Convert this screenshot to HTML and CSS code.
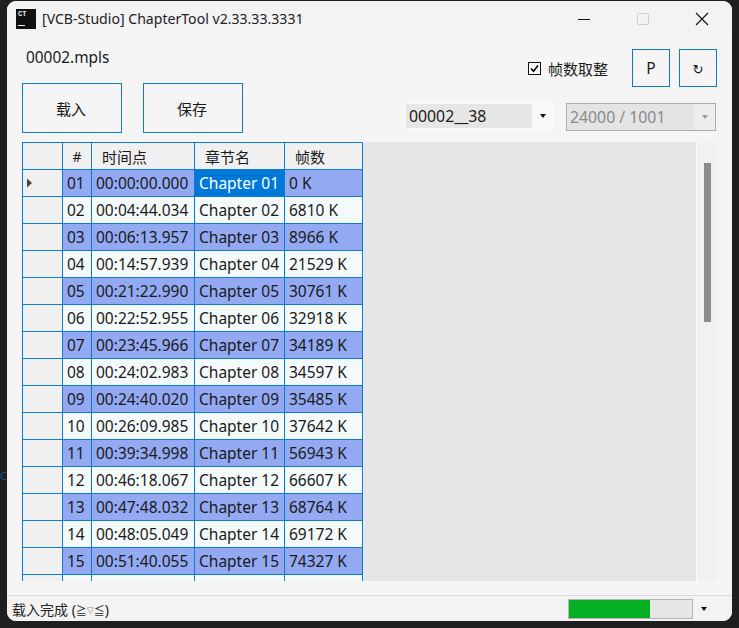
FILE: index.html
```html
<!DOCTYPE html>
<html lang="zh">
<head>
<meta charset="utf-8">
<title>ChapterTool</title>
<link rel="stylesheet" href="styles.css">
</head>
<body>
<span class="behind">C</span>
<div class="window">
  <header class="titlebar">
    <span class="appicon"><span class="appicon-text">CT</span><span class="appicon-bar"></span></span>
    <span class="title">[VCB-Studio] ChapterTool v2.33.33.3331</span>
    <span class="controls">
      <svg class="ctl" width="14" height="14" viewBox="0 0 14 14"><path d="M1 7.5h12" stroke="#111" stroke-width="1.1"/></svg>
      <svg class="ctl" width="14" height="14" viewBox="0 0 14 14"><rect x="1.5" y="1.5" width="11" height="11" rx="1.5" fill="none" stroke="#cfcfcf"/></svg>
      <svg class="ctl" width="14" height="14" viewBox="0 0 14 14"><path d="M1 1l12 12M13 1L1 13" stroke="#111" stroke-width="1.1"/></svg>
    </span>
  </header>
  <section class="toolbar">
    <div class="left">
      <div class="file">00002.mpls</div>
      <div class="actions">
        <button class="btn big">载入</button>
        <button class="btn big">保存</button>
      </div>
    </div>
    <div class="right">
      <div class="top-row">
        <label class="check">
          <span class="box"><svg width="13" height="13" viewBox="0 0 13 13"><path d="M3 6.5l2.5 2.7L10 3.4" fill="none" stroke="#000" stroke-width="1.6"/></svg></span>
          <span>帧数取整</span>
        </label>
        <button class="btn square">P</button>
        <button class="btn square refresh">↻</button>
      </div>
      <div class="combo-row">
        <div class="combo">
          <span class="combo-value">00002__38</span>
          <span class="combo-arrow"><i class="tri"></i></span>
        </div>
        <div class="combo off">
          <span class="combo-value">24000 / 1001</span>
          <span class="combo-arrow"><i class="tri"></i></span>
        </div>
      </div>
    </div>
  </section>
  <main class="main">
    <div class="grid">
      <table class="table">
        <thead>
          <tr><th class="rh"></th><th class="c-n">#</th><th class="c-t">时间点</th><th class="c-c">章节名</th><th class="c-f">帧数</th></tr>
        </thead>
        <tbody>
          <tr class="alt"><td class="rh"><svg class="cur" width="5" height="10" viewBox="0 0 6 11"><path d="M0 0l6 5.5L0 11z" fill="#444"/></svg></td><td>01</td><td>00:00:00.000</td><td class="sel">Chapter 01</td><td>0 K</td></tr>
          <tr><td class="rh"></td><td>02</td><td>00:04:44.034</td><td>Chapter 02</td><td>6810 K</td></tr>
          <tr class="alt"><td class="rh"></td><td>03</td><td>00:06:13.957</td><td>Chapter 03</td><td>8966 K</td></tr>
          <tr><td class="rh"></td><td>04</td><td>00:14:57.939</td><td>Chapter 04</td><td>21529 K</td></tr>
          <tr class="alt"><td class="rh"></td><td>05</td><td>00:21:22.990</td><td>Chapter 05</td><td>30761 K</td></tr>
          <tr><td class="rh"></td><td>06</td><td>00:22:52.955</td><td>Chapter 06</td><td>32918 K</td></tr>
          <tr class="alt"><td class="rh"></td><td>07</td><td>00:23:45.966</td><td>Chapter 07</td><td>34189 K</td></tr>
          <tr><td class="rh"></td><td>08</td><td>00:24:02.983</td><td>Chapter 08</td><td>34597 K</td></tr>
          <tr class="alt"><td class="rh"></td><td>09</td><td>00:24:40.020</td><td>Chapter 09</td><td>35485 K</td></tr>
          <tr><td class="rh"></td><td>10</td><td>00:26:09.985</td><td>Chapter 10</td><td>37642 K</td></tr>
          <tr class="alt"><td class="rh"></td><td>11</td><td>00:39:34.998</td><td>Chapter 11</td><td>56943 K</td></tr>
          <tr><td class="rh"></td><td>12</td><td>00:46:18.067</td><td>Chapter 12</td><td>66607 K</td></tr>
          <tr class="alt"><td class="rh"></td><td>13</td><td>00:47:48.032</td><td>Chapter 13</td><td>68764 K</td></tr>
          <tr><td class="rh"></td><td>14</td><td>00:48:05.049</td><td>Chapter 14</td><td>69172 K</td></tr>
          <tr class="alt"><td class="rh"></td><td>15</td><td>00:51:40.055</td><td>Chapter 15</td><td>74327 K</td></tr>
          <tr><td class="rh"></td><td></td><td></td><td></td><td></td></tr>
        </tbody>
      </table>
    </div>
    <div class="scrollbar"><div class="thumb"></div></div>
  </main>
  <footer class="status">
    <span class="status-text">载入完成 (<span class="kao">≧</span><span class="kao-mid">▽</span><span class="kao">≦</span>)</span>
    <div class="progress"><div class="progress-fill"></div></div>
    <span class="status-arrow"><i class="tri"></i></span>
  </footer>
</div>
</body>
</html>
```
FILE: styles.css
```css
* { box-sizing: border-box; }
html, body { margin: 0; height: 628px; overflow: hidden; }
body {
  background: #1f1f1f;
  padding: 1px 7px 7px;
  font-family: "Noto Sans", "Noto Sans CJK SC", sans-serif;
  font-size: 14px;
  color: #1a1a1a;
  position: relative;
}
.behind {
  position: absolute;
  left: 0;
  top: 468px;
  font-size: 11px;
  color: #1c4f8c;
}
.window {
  height: 620px;
  background: #f5f5f5;
  border-radius: 9px;
  display: flex;
  flex-direction: column;
  overflow: hidden;
  position: relative;
}
.titlebar {
  height: 32px;
  flex: none;
  background: #f3f3f3;
  display: flex;
  align-items: center;
  padding-left: 9px;
  padding-top: 3px;
}
.appicon {
  width: 20px;
  height: 20px;
  background: #111;
  position: relative;
  flex: none;
  display: block;
}
.appicon-text {
  position: absolute;
  left: 2px;
  top: 1px;
  font: bold 7px/9px "Liberation Mono", monospace;
  color: #eee;
}
.appicon-bar {
  position: absolute;
  left: 2px;
  bottom: 3px;
  width: 7px;
  height: 1px;
  background: #eee;
}
.title {
  margin-left: 6px;
  font-size: 14.1px;
  color: #222;
}
.controls {
  margin-left: auto;
  display: flex;
  align-items: center;
  gap: 45px;
  padding-right: 23px;
}
.ctl { display: block; }
.toolbar {
  height: 109px;
  flex: none;
  display: flex;
  justify-content: space-between;
  padding: 0 15px;
}
.left { padding-top: 13px; }
.file {
  height: 24px;
  line-height: 24px;
  padding-left: 4px;
  font-size: 15.4px;
}
.actions {
  display: flex;
  gap: 21px;
  margin-top: 13px;
}
.btn {
  background: #f5f5f5;
  border: 1px solid #0f7cc4;
  padding: 0 2px 0 0;
  font-family: inherit;
  color: #1a1a1a;
  font-size: 15px;
}
.big { width: 100px; height: 50px; }
.square { width: 38px; height: 38px; font-size: 15.5px; padding: 0; }
.refresh { font-family: "DejaVu Sans", sans-serif; font-size: 13px; padding-top: 3px; }
.right {
  display: flex;
  flex-direction: column;
  align-items: flex-end;
  padding-top: 16px;
  gap: 16px;
}
.top-row {
  display: flex;
  align-items: center;
  gap: 9px;
}
.check {
  display: flex;
  align-items: center;
  gap: 7px;
  margin-right: 15px;
  font-size: 15px;
}
.box {
  width: 13px;
  height: 13px;
  border: 1px solid #111;
  background: #fff;
  display: flex;
  align-items: center;
  justify-content: center;
}
.box svg { flex: none; display: block; margin: -1px; }
.combo-row {
  display: flex;
  align-items: flex-start;
  gap: 12px;
  margin-right: 1px;
}
.combo {
  width: 149px;
  height: 26px;
  display: flex;
  background: #f8f8f8;
  border: 1px solid #fbfbfb;
  font-size: 15.8px;
}
.combo-value {
  flex: 1;
  background: #e6e6e6;
  line-height: 24px;
  padding-left: 3px;
  color: #1a1a1a;
}
.combo-arrow {
  width: 21px;
  display: flex;
  align-items: center;
  justify-content: center;
  border-left: 1px solid #fbfbfb;
}
.tri {
  display: block;
  width: 0;
  height: 0;
  border-left: 3.5px solid transparent;
  border-right: 3.5px solid transparent;
  border-top: 4px solid #111;
}
.combo.off {
  width: 150px;
  height: 28px;
  border: 1px solid #acacac;
  background: #ededed;
  color: #8a8a8a;
}
.off .combo-value {
  background: #e4e4e4;
  color: #8a8a8a;
  line-height: 26px;
}
.off .combo-arrow { border-left: 0; }
.off .tri { border-top-color: #9a9a9a; }
.main {
  height: 439px;
  flex: none;
  margin: 0 15px;
  display: flex;
}
.grid {
  width: 675px;
  height: 439px;
  background: #e6e6e6;
  overflow: hidden;
  flex: none;
  border-right: 1px solid #fafafa;
}
.table {
  width: 341px;
  border-collapse: separate;
  border-spacing: 0;
  table-layout: fixed;
  border-left: 1px solid #0f7cd0;
  border-top: 1px solid #0f7cd0;
  font-size: 15.5px;
}
.table th, .table td {
  height: 27px;
  padding: 0 0 0 4px;
  border-right: 1px solid #0f7cd0;
  border-bottom: 1px solid #0f7cd0;
  font-weight: 400;
  text-align: left;
  white-space: nowrap;
  overflow: hidden;
  background: #f4fafa;
}
.table th { background: #f0f0f0; padding-left: 10px; font-size: 15px; }
.table th.c-n { text-align: center; padding: 0; font-size: 14px; }
.rh { width: 40px; }
.c-n { width: 29px; }
.c-t { width: 103px; }
.c-c { width: 90px; }
.c-f { width: 78px; }
.table td.rh { background: #f0f0f0; padding-left: 4px; }
.table tr.alt td { background: #93a9f2; }
.table tr.alt td.rh { background: #f0f0f0; }
.table tr.alt td.sel { background: #0078d7; color: #fff; }
.cur { display: block; }
.scrollbar {
  width: 20px;
  height: 439px;
  background: #f1f1f1;
  padding: 21px 7px 0;
  flex: none;
}
.thumb { width: 7px; height: 159px; background: #8a8a8a; }
.status {
  margin-top: 14px;
  flex: 1;
  border-top: 1px solid #d9d9d9;
  background: #f3f3f3;
  display: flex;
  align-items: center;
  padding-left: 5px;
  padding-right: 24px;
}
.status-text { font-size: 14px; color: #222; }
.kao { font-size: 11px; }
.kao-mid { font-size: 7px; vertical-align: 2px; }
.progress {
  margin-left: auto;
  width: 125px;
  height: 20px;
  border: 1px solid #b5b5b5;
  background: #e6e6e6;
}
.progress-fill { width: 81px; height: 18px; background: #06b025; }
.status-arrow {
  margin-left: 8px;
  width: 7px;
  display: block;
}
```
